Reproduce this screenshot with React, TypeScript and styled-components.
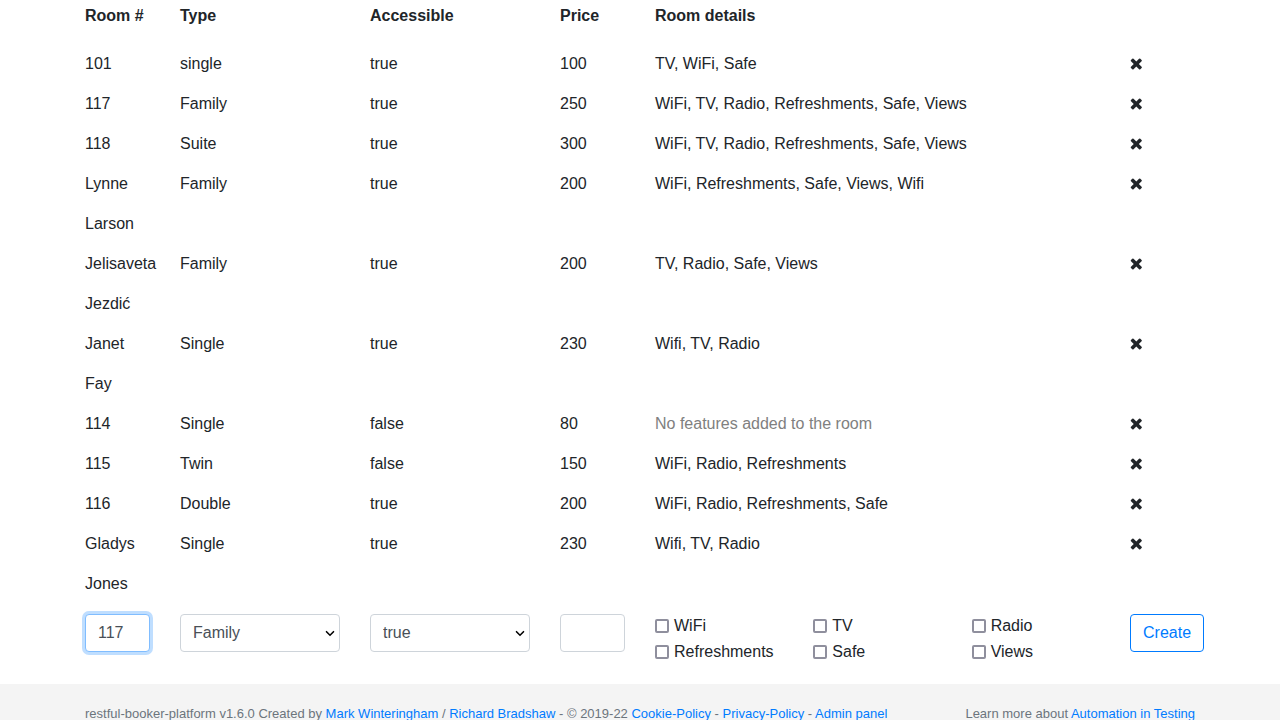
import React from 'react';
import styled, { createGlobalStyle } from 'styled-components';

const GlobalStyle = createGlobalStyle`
  *, *::before, *::after {
    box-sizing: border-box;
  }
  body {
    margin: 0;
    background: #fff;
    color: #212529;
    font-family: "Liberation Sans", Arial, sans-serif;
    font-size: 16px;
    line-height: 24px;
  }
`;

const Container = styled.main`
  width: 100%;
  max-width: 1140px;
  margin: 0 auto;
`;

const RoomTable = styled.table`
  width: 100%;
  table-layout: fixed;
  border-collapse: collapse;
`;

const Column = styled.col<{ $span: number }>`
  width: calc(100% / 12 * ${(p) => p.$span});
`;

const HeadCell = styled.th`
  padding: 0 15px 12px;
  line-height: 32px;
  font-weight: 700;
  text-align: left;
  white-space: nowrap;
`;

const Cell = styled.td<{ $muted?: boolean }>`
  padding: 0 15px;
  line-height: 40px;
  vertical-align: top;
  color: ${(p) => (p.$muted ? 'grey' : 'inherit')};
`;

const DeleteButton = styled.button`
  display: flex;
  align-items: center;
  height: 40px;
  padding: 0;
  border: 0;
  background: none;
  color: inherit;
  cursor: pointer;
`;

const RoomForm = styled.form`
  display: grid;
  grid-template-columns:
    minmax(0, 1fr) minmax(0, 2fr) minmax(0, 2fr) minmax(0, 1fr)
    minmax(0, 5fr) minmax(0, 1fr);
  align-items: start;
  padding: 10px 0 20px;
`;

const Field = styled.div`
  position: relative;
  padding: 0 15px;
`;

const control = `
  display: block;
  width: 100%;
  height: 38px;
  padding: 6px 12px;
  border-radius: 4px;
  background: #fff;
  color: #495057;
  font: inherit;
  outline: 0;
`;

const TextInput = styled.input<{ $active?: boolean }>`
  ${control}
  border: 1px solid ${(p) => (p.$active ? '#80bdff' : '#ced4da')};
  box-shadow: ${(p) => (p.$active ? '0 0 0 3px rgba(0, 123, 255, 0.25)' : 'none')};
`;

const Select = styled.select`
  ${control}
  border: 1px solid #ced4da;
  appearance: none;
`;

const Chevron = styled.svg`
  position: absolute;
  top: 16px;
  right: 20px;
  width: 10px;
  height: 7px;
  pointer-events: none;
`;

const Features = styled.div`
  display: grid;
  grid-template-columns: repeat(3, minmax(0, 1fr));
  gap: 2px 30px;
  padding: 0 15px;
`;

const FeatureLabel = styled.label`
  display: flex;
  align-items: center;
  gap: 5px;
`;

const CheckBox = styled.input`
  appearance: none;
  flex: none;
  width: 14px;
  height: 14px;
  margin: 0;
  border: 2px solid #8f8f9d;
  border-radius: 2px;
  background: #fff;

  &:checked {
    background: #0060df;
    border-color: #0060df;
  }
`;

const CreateButton = styled.button`
  height: 38px;
  padding: 6px 12px;
  border: 1px solid #007bff;
  border-radius: 4px;
  background: transparent;
  color: #007bff;
  font: inherit;
  cursor: pointer;
`;

const Footer = styled.footer`
  padding: 20px 0;
  background: #f4f4f4;
`;

const FooterRow = styled.div`
  display: flex;
  justify-content: space-between;
  max-width: 1140px;
  margin: 0 auto;
  padding: 0 15px;
`;

const FooterText = styled.p`
  margin: 0;
  color: #6c757d;
  font-size: 13px;
  line-height: 20px;
  white-space: nowrap;
`;

const FooterLink = styled.a`
  color: #007bff;
  text-decoration: none;
`;

const columnSpans = [1, 2, 2, 1, 5, 1];

const rooms = [
  { name: '101', type: 'single', accessible: 'true', price: 100, details: 'TV, WiFi, Safe' },
  { name: '117', type: 'Family', accessible: 'true', price: 250, details: 'WiFi, TV, Radio, Refreshments, Safe, Views' },
  { name: '118', type: 'Suite', accessible: 'true', price: 300, details: 'WiFi, TV, Radio, Refreshments, Safe, Views' },
  { name: 'Lynne Larson', type: 'Family', accessible: 'true', price: 200, details: 'WiFi, Refreshments, Safe, Views, Wifi' },
  { name: 'Jelisaveta Jezdić', type: 'Family', accessible: 'true', price: 200, details: 'TV, Radio, Safe, Views' },
  { name: 'Janet Fay', type: 'Single', accessible: 'true', price: 230, details: 'Wifi, TV, Radio' },
  { name: '114', type: 'Single', accessible: 'false', price: 80, details: '' },
  { name: '115', type: 'Twin', accessible: 'false', price: 150, details: 'WiFi, Radio, Refreshments' },
  { name: '116', type: 'Double', accessible: 'true', price: 200, details: 'WiFi, Radio, Refreshments, Safe' },
  { name: 'Gladys Jones', type: 'Single', accessible: 'true', price: 230, details: 'Wifi, TV, Radio' },
];

const features = ['WiFi', 'TV', 'Radio', 'Refreshments', 'Safe', 'Views'];

function RemoveIcon() {
  return (
    <svg width="12" height="12" viewBox="224 320 1280 1280" fill="currentColor" aria-hidden="true">
      <path d="M1490 1322q0 40-28 68l-136 136q-28 28-68 28t-68-28l-294-294-294 294q-28 28-68 28t-68-28l-136-136q-28-28-28-68t28-68l294-294-294-294q-28-28-28-68t28-68l136-136q28-28 68-28t68 28l294 294 294-294q28-28 68-28t68 28l136 136q28 28 28 68t-28 68l-294 294 294 294q28 28 28 68z" />
    </svg>
  );
}

function SelectChevron() {
  return (
    <Chevron viewBox="0 0 10 7" aria-hidden="true">
      <path d="M1.5 1.7 5 5.2 8.5 1.7" fill="none" stroke="#000" strokeWidth="1.6" strokeLinecap="round" />
    </Chevron>
  );
}

export default function App() {
  return (
    <>
      <GlobalStyle />
      <Container>
        <RoomTable>
          <colgroup>
            {columnSpans.map((span, i) => (
              <Column key={i} $span={span} />
            ))}
          </colgroup>
          <thead>
            <tr>
              <HeadCell scope="col">Room #</HeadCell>
              <HeadCell scope="col">Type</HeadCell>
              <HeadCell scope="col">Accessible</HeadCell>
              <HeadCell scope="col">Price</HeadCell>
              <HeadCell scope="col">Room details</HeadCell>
              <HeadCell as="td" />
            </tr>
          </thead>
          <tbody>
            {rooms.map((room) => (
              <tr key={room.name}>
                <Cell>{room.name}</Cell>
                <Cell>{room.type}</Cell>
                <Cell>{room.accessible}</Cell>
                <Cell>{room.price}</Cell>
                <Cell $muted={!room.details}>{room.details || 'No features added to the room'}</Cell>
                <Cell>
                  <DeleteButton type="button" aria-label={`Delete room ${room.name}`}>
                    <RemoveIcon />
                  </DeleteButton>
                </Cell>
              </tr>
            ))}
          </tbody>
        </RoomTable>
        <RoomForm onSubmit={(e) => e.preventDefault()}>
          <Field>
            <TextInput $active type="text" aria-label="Room name" defaultValue="117" />
          </Field>
          <Field>
            <Select aria-label="Type" defaultValue="Family">
              <option>Single</option>
              <option>Twin</option>
              <option>Double</option>
              <option>Family</option>
              <option>Suite</option>
            </Select>
            <SelectChevron />
          </Field>
          <Field>
            <Select aria-label="Accessible" defaultValue="true">
              <option>false</option>
              <option>true</option>
            </Select>
            <SelectChevron />
          </Field>
          <Field>
            <TextInput type="text" aria-label="Price" />
          </Field>
          <Features>
            {features.map((feature) => (
              <FeatureLabel key={feature}>
                <CheckBox type="checkbox" name="features" value={feature} />
                {feature}
              </FeatureLabel>
            ))}
          </Features>
          <Field>
            <CreateButton type="submit">Create</CreateButton>
          </Field>
        </RoomForm>
      </Container>
      <Footer>
        <FooterRow>
          <FooterText>
            restful-booker-platform v1.6.0 Created by <FooterLink href="#mark">Mark Winteringham</FooterLink> /{' '}
            <FooterLink href="#richard">Richard Bradshaw</FooterLink> - © 2019-22{' '}
            <FooterLink href="#cookie">Cookie-Policy</FooterLink> -{' '}
            <FooterLink href="#privacy">Privacy-Policy</FooterLink> -{' '}
            <FooterLink href="#admin">Admin panel</FooterLink>
          </FooterText>
          <FooterText>
            Learn more about <FooterLink href="#testing">Automation in Testing</FooterLink>
          </FooterText>
        </FooterRow>
      </Footer>
    </>
  );
}
